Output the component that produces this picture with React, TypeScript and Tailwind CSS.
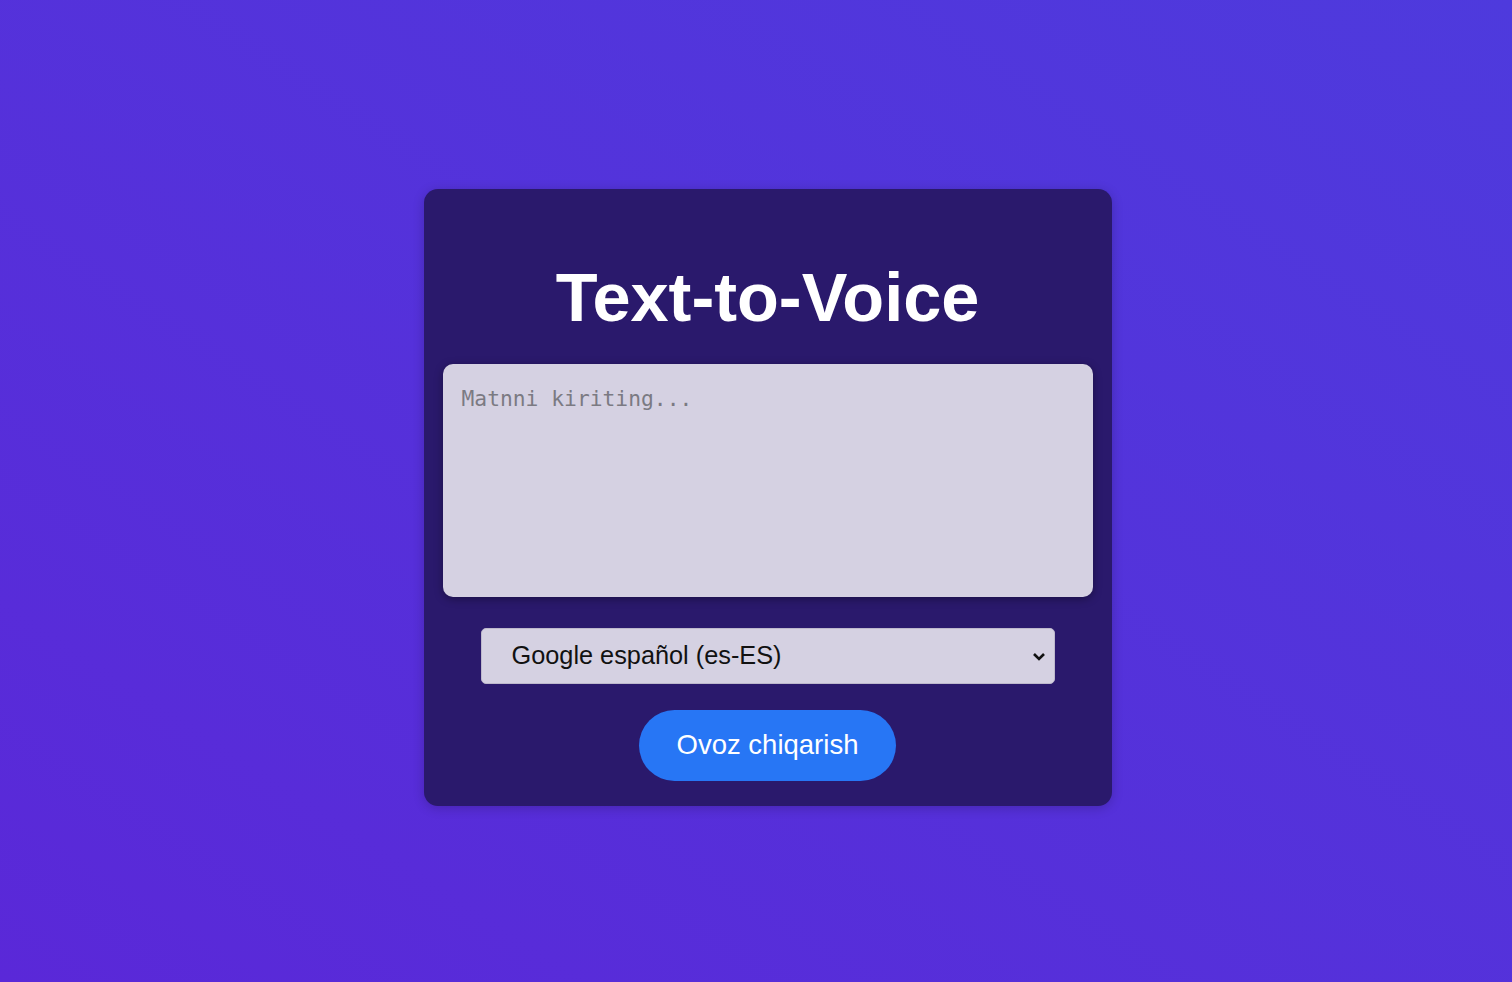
import { useState } from "react";

export default function App() {
  const [text, setText] = useState("");
  const [voice, setVoice] = useState("es-ES");

  const voices = [
    { code: "es-ES", name: "Google español (es-ES)" },
    { code: "en-US", name: "Google US English (en-US)" },
    { code: "ru-RU", name: "Google русский (ru-RU)" },
    { code: "de-DE", name: "Google Deutsch (de-DE)" },
  ];

  return (
    <div className="flex min-h-[982px] w-full items-start justify-center bg-gradient-to-tr from-[#5a28d8] to-[#4e3add] pl-[23px] pt-[189px] font-['Liberation_Sans',Arial,sans-serif]">
      <div className="flex w-[688px] flex-col items-center rounded-[14px] bg-[#2a196c] px-[19px] pb-[25px] pt-[75px] shadow-[0_2px_12px_rgba(0,0,0,0.2)]">
        <h1 className="text-[68.5px] font-bold leading-[68.5px] text-white">
          Text-to-Voice
        </h1>

        {/* Text input */}
        <textarea
          autoFocus
          value={text}
          onChange={(e) => setText(e.target.value)}
          placeholder="Matnni kiriting..."
          className="mt-[31px] h-[233px] w-[650px] resize-none rounded-[10px] bg-[#d5d1e2] px-[19px] pb-[20px] pt-[21px] font-['DejaVu_Sans_Mono',monospace] text-[21.3px] leading-[27px] text-[#333] caret-[#444] shadow-[0_2px_8px_rgba(0,0,0,0.35)] outline-none placeholder:text-[#7b7a82]"
        />

        {/* Voice select */}
        <div className="relative mt-[31px] w-[574px]">
          <select
            value={voice}
            onChange={(e) => setVoice(e.target.value)}
            className="h-[56px] w-full appearance-none rounded-[5px] border border-[#bdb8cc] bg-[#d5d1e2] pl-[30px] pr-[40px] text-[25.3px] text-[#111] outline-none"
          >
            {voices.map((v) => (
              <option key={v.code} value={v.code}>
                {v.name}
              </option>
            ))}
          </select>
          <svg
            className="pointer-events-none absolute right-[9px] top-1/2 -translate-y-1/2"
            width="14"
            height="10"
            viewBox="0 0 14 10"
          >
            <path d="M2 3 L7 8 L12 3" fill="none" stroke="#111" strokeWidth="2.6" />
          </svg>
        </div>

        <button className="mt-[26px] h-[71px] rounded-full bg-[#2776f5] px-[38px] text-[27.5px] text-white">
          Ovoz chiqarish
        </button>
      </div>
    </div>
  );
}
